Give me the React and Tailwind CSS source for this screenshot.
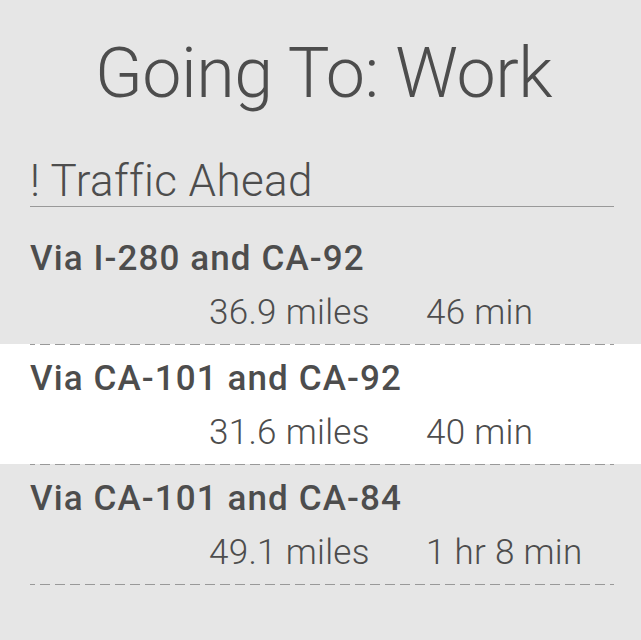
export default function App() {
  const routes = [
    { name: "Via I-280 and CA-92", dist: "36.9 miles", time: "46 min", selected: false },
    { name: "Via CA-101 and CA-92", dist: "31.6 miles", time: "40 min", selected: true },
    { name: "Via CA-101 and CA-84", dist: "49.1 miles", time: "1 hr 8 min", selected: false },
  ];
  const dash =
    "ml-[30px] mr-[27px] h-px bg-[linear-gradient(to_right,#999_0_10px,transparent_10px_15px)] bg-[length:15px_1px] bg-[position:-5px_0] bg-repeat-x";
  return (
    <div className="w-full h-[640px] bg-[#e6e6e6] overflow-hidden text-[#4d4d4d] font-['Roboto','Liberation_Sans',sans-serif]">
      <div className="pt-[38px] pl-[6px]">
        <h1 className="text-center text-[70px] leading-[70px] font-light tracking-[-0.5px]">Going To: Work</h1>
      </div>
      <div className="mt-[51px] ml-[30px] mr-[27px] pb-[3px] border-b border-[#999]">
        <div className="text-[44px] leading-[44px] font-light tracking-[0.4px]">! Traffic Ahead</div>
      </div>
      {routes.map((r, i) => (
        <div key={i} className={r.selected ? "bg-white" : ""}>
          {i > 0 && <div className={dash} />}
          <div className={"pl-[30px] pr-[27px] pb-[13px] " + (i === 0 ? "pt-[34px]" : "pt-[16px]")}>
            <div className="text-[35px] leading-[36px] font-medium tracking-[1.1px]">{r.name}</div>
            <div className="mt-[18px] flex text-[35px] leading-[36px] font-light tracking-[0.3px] pl-[179px]">
              <span className="w-[217px]">{r.dist}</span>
              <span>{r.time}</span>
            </div>
          </div>
        </div>
      ))}
      <div className={dash} />
    </div>
  );
}
